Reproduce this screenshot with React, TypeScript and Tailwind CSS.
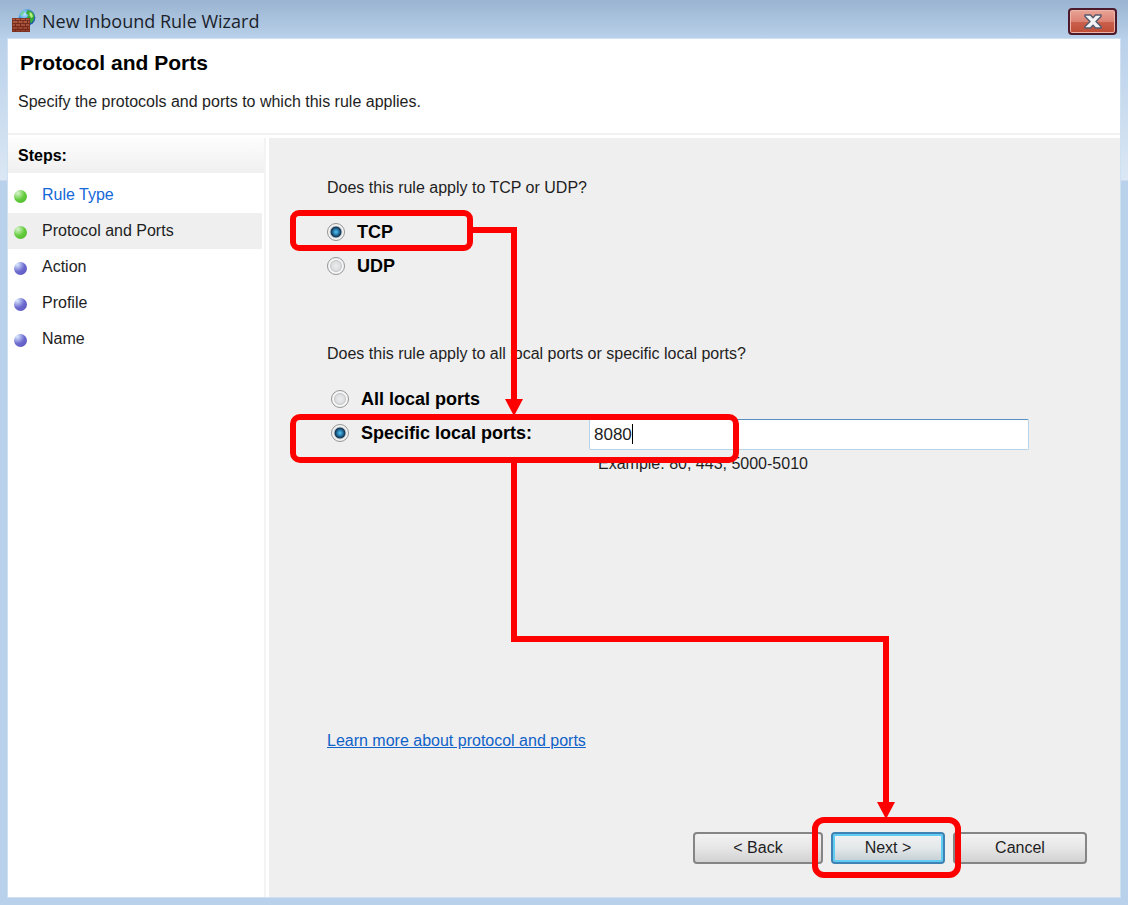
import React, { useState } from 'react';
import clsx from 'clsx';

const STEPS = [
    { name: 'Rule Type', done: true, link: true },
    { name: 'Protocol and Ports', done: true, current: true },
    { name: 'Action' },
    { name: 'Profile' },
    { name: 'Name' },
];

function FirewallIcon() {
    return (
        <svg width="24" height="24" viewBox="0 0 24 24" aria-hidden="true">
            <defs>
                <radialGradient id="globe" cx="0.35" cy="0.3" r="0.8">
                    <stop offset="0" stopColor="#bfe9ff" />
                    <stop offset="0.4" stopColor="#4b9fe6" />
                    <stop offset="1" stopColor="#0c3f9c" />
                </radialGradient>
                <linearGradient id="wall" x1="0" y1="0" x2="0" y2="1">
                    <stop offset="0" stopColor="#b8644c" />
                    <stop offset="1" stopColor="#8e3a26" />
                </linearGradient>
            </defs>
            <circle cx="15" cy="8.5" r="8.300" fill="url(#globe)" />
            <path d="M15 1.500c3.500-.5 6.500 2 7.500 5.500l-1 4.500-2.500 3-1.500-3.500-3-2 2-3-2.500-1.500z" fill="#37a83a" />
            <path d="M17.500 3l2.500 1.500 1 3-1.500 1.500-2-2.500z" fill="#b4f07c" />
            <path d="M8 5l3-3 2 .5-2 3-2 2z" fill="#6fd0a0" />
            <path d="M0 9h18v14H0z" fill="url(#wall)" />
            <path
                d="M0 11.500h18M0 14.500h18M0 17.500h18M0 20.500h18M3.500 9v2.500M8.500 9v2.500M13.500 9v2.500M6 11.500v3M11 11.500v3M15.500 11.500v3M3.500 14.500v3M8.500 14.500v3M13.500 14.500v3M6 17.500v3M11 17.500v3M15.500 17.500v3M3.500 20.500V23M8.500 20.500V23M13.500 20.500V23"
                fill="none"
                stroke="#6c2416"
                strokeWidth="0.800"
            />
            <path d="M.5 9.500h17v13H.5z" fill="none" stroke="#7b3020" strokeWidth="0.800" />
        </svg>
    );
}

function TitleBar() {
    return (
        <header className="flex h-[39px] items-center gap-[6px] bg-linear-to-b from-[#9ab4d1] to-[#b9d1ea] pt-[2px] pl-3 pr-[11px]">
            <FirewallIcon />
            <h1 className="flex-1 font-['Open_Sans','Noto_Sans',sans-serif] text-[18px] leading-6 text-[#1b1f2b]">
                New Inbound Rule Wizard
            </h1>
            <button
                type="button"
                aria-label="Close"
                className="mt-[2px] flex h-[27px] w-[49px] items-center justify-center rounded-[4px] border-2 border-[#4c1a2a] bg-linear-to-b from-[#e9a497] from-0% via-[#dc8273] via-50% to-[#c4563e] shadow-[inset_0_0_0_1px_#edb5aa,inset_0_-11px_0_0_#b8412a80]"
            >
                <svg width="18" height="15" viewBox="0 0 18 15" aria-hidden="true">
                    <path
                        d="M1 1h5.500L9 3.700 11.500 1H17v1.500L12 7.500l5 5V14h-5.500L9 11.300 6.500 14H1v-1.500l5-5-5-5z"
                        fill="#f4f4f4"
                        stroke="#565b6e"
                        strokeWidth="1.500"
                        strokeLinejoin="round"
                    />
                </svg>
            </button>
        </header>
    );
}

function Sidebar() {
    return (
        <nav className="mr-[3px] w-[258px] flex-none border-r-2 border-[#f3f3f3]">
            <h3 className="mb-1 flex h-[35px] items-center bg-linear-to-b from-[#fdfdfd] to-[#f0f0f0] pl-[10px] font-bold text-black">
                Steps:
            </h3>
            <ul className="mr-[2px]">
                {STEPS.map((step) => (
                    <li
                        key={step.name}
                        className={clsx('flex h-9 items-center gap-[15px] pl-[6px]', step.current && 'bg-[#efefef]')}
                    >
                        <span
                            className={clsx(
                                'mt-[2px] size-[13px] rounded-full',
                                step.done
                                    ? 'bg-[radial-gradient(circle_at_30%_25%,#d8f5cc_0%,#62cb3c_50%,#4fb52c_100%)]'
                                    : 'bg-[radial-gradient(circle_at_25%_20%,#dcecff_0%,#6d6ad0_50%,#5551b8_100%)]'
                            )}
                        />
                        {step.link ? (
                            <a href="#rule-type" className="text-[#1468d8]">{step.name}</a>
                        ) : (
                            <span>{step.name}</span>
                        )}
                    </li>
                ))}
            </ul>
        </nav>
    );
}

type RadioProps = {
    name: string;
    label: string;
    checked: boolean;
    onChange: () => void;
};

function Radio({ name, label, checked, onChange }: RadioProps) {
    return (
        <label className="flex items-center gap-3 text-[18px] leading-6 font-bold text-black">
            <input
                type="radio"
                name={name}
                checked={checked}
                onChange={onChange}
                className="size-[18px] flex-none appearance-none rounded-full border border-[#949596] bg-[radial-gradient(circle_closest-side_at_50%_50%,#ececec_0%,#dcdee0_55%,#c4c6c8_68%,#f6f6f6_80%,#f6f6f6_100%)] checked:bg-[radial-gradient(circle_closest-side_at_50%_50%,#5cc4ee_0%,#2a86ba_30%,#12324e_62%,#b4bcc4_72%,#f4f4f4_84%,#f4f4f4_100%)]"
            />
            {label}
        </label>
    );
}

function WizardButton({ children, className }: { children: React.ReactNode; className: string }) {
    return (
        <button
            type="button"
            className={clsx(
                'h-8 rounded-[4px] bg-linear-to-b from-[#f2f2f2] via-50%',
                className
            )}
        >
            {children}
        </button>
    );
}

// Red frames and arrows that lead from the protocol to the port and on to Next
function Callouts() {
    return (
        <svg
            width="1128"
            height="905"
            viewBox="0 0 1128 905"
            aria-hidden="true"
            className="pointer-events-none absolute top-0 left-0"
        >
            <g fill="none" stroke="#ff0000" strokeWidth="6">
                <rect x="293" y="213" width="177" height="35" rx="6" />
                <rect x="293" y="417" width="443" height="43" rx="7" />
                <rect x="815" y="820" width="143" height="55" rx="9" />
                <path d="M472 230h42v172" />
                <path d="M514 461v178h372v166" />
            </g>
            <path d="M505 399h18l-9 17zM877 802h18l-9 17z" fill="#ff0000" />
        </svg>
    );
}

function App() {
    const [protocol, setProtocol] = useState('tcp');
    const [scope, setScope] = useState('specific');
    const [port, setPort] = useState('8080');

    return (
        <div className="relative flex min-h-screen flex-col bg-[#b9d1ea] font-['Liberation_Sans',Arial,sans-serif] text-[16px] leading-6 text-[#1e1e1e]">
            <TitleBar />
            <div className="flex flex-1 flex-col bg-linear-to-b from-[#b9d1ea] from-0% via-[#dbe7f4] via-[141px] to-[#b9d1ea] to-[142px] px-2 pb-2">
                <main className="flex flex-1 flex-col bg-white shadow-[0_0_0_1px_#cfe0f1]">
                    <div className="h-24 border-b-2 border-[#f1f1f1] pt-3">
                        <h2 className="pl-3 text-[21px] leading-6 font-bold text-black">Protocol and Ports</h2>
                        <p className="mt-[15px] pl-[10px]">Specify the protocols and ports to which this rule applies.</p>
                    </div>
                    <div className="mt-[3px] flex flex-1">
                        <Sidebar />
                        <section className="flex flex-1 flex-col bg-[#efefef] pt-[38px] pr-[33px] pb-[33px] pl-[58px]">
                            <p>Does this rule apply to TCP or UDP?</p>
                            <div className="mt-5 flex flex-col items-start gap-[10px]">
                                <Radio name="protocol" label="TCP" checked={protocol === 'tcp'} onChange={() => setProtocol('tcp')} />
                                <Radio name="protocol" label="UDP" checked={protocol === 'udp'} onChange={() => setProtocol('udp')} />
                            </div>

                            <p className="mt-16">Does this rule apply to all local ports or specific local ports?</p>
                            <div className="mt-[21px] pr-[58px] pl-1">
                                <Radio name="scope" label="All local ports" checked={scope === 'all'} onChange={() => setScope('all')} />
                                <div className="mt-2 flex items-start">
                                    <div className="w-[258px] flex-none pt-[2px]">
                                        <Radio name="scope" label="Specific local ports:" checked={scope === 'specific'} onChange={() => setScope('specific')} />
                                    </div>
                                    <div className="relative flex-1">
                                        <input
                                            type="text"
                                            aria-label="Specific local ports"
                                            value={port}
                                            onChange={(e) => setPort(e.target.value)}
                                            className="block h-[31px] w-full rounded-[2px] border border-[#b5d3ea] border-t-[#5a8fbf] bg-white px-1 text-[17px]"
                                        />
                                        <span className="absolute top-[5px] left-[43px] h-5 w-px bg-black" />
                                    </div>
                                </div>
                                <p className="mt-[2px] pl-[267px]">Example: 80, 443, 5000-5010</p>
                            </div>

                            <a href="#learn-more" className="mt-[253px] self-start text-[#0f62c8] underline">
                                Learn more about protocol and ports
                            </a>
                            <div className="mt-auto flex justify-end gap-2">
                                <WizardButton className="w-[130px] border-2 border-[#858585] via-[#e6e6e6] to-[#d2d2d2]">&lt; Back</WizardButton>
                                <WizardButton className="w-[114px] border-2 border-[#3f83b5] via-[#e3e8ea] to-[#c3ced4] shadow-[inset_0_0_0_2px_#5fcdf3]">Next &gt;</WizardButton>
                                <WizardButton className="w-[134px] border-2 border-[#858585] via-[#e6e6e6] to-[#d2d2d2]">Cancel</WizardButton>
                            </div>
                        </section>
                    </div>
                </main>
            </div>
            <Callouts />
        </div>
    );
}

export default App;
